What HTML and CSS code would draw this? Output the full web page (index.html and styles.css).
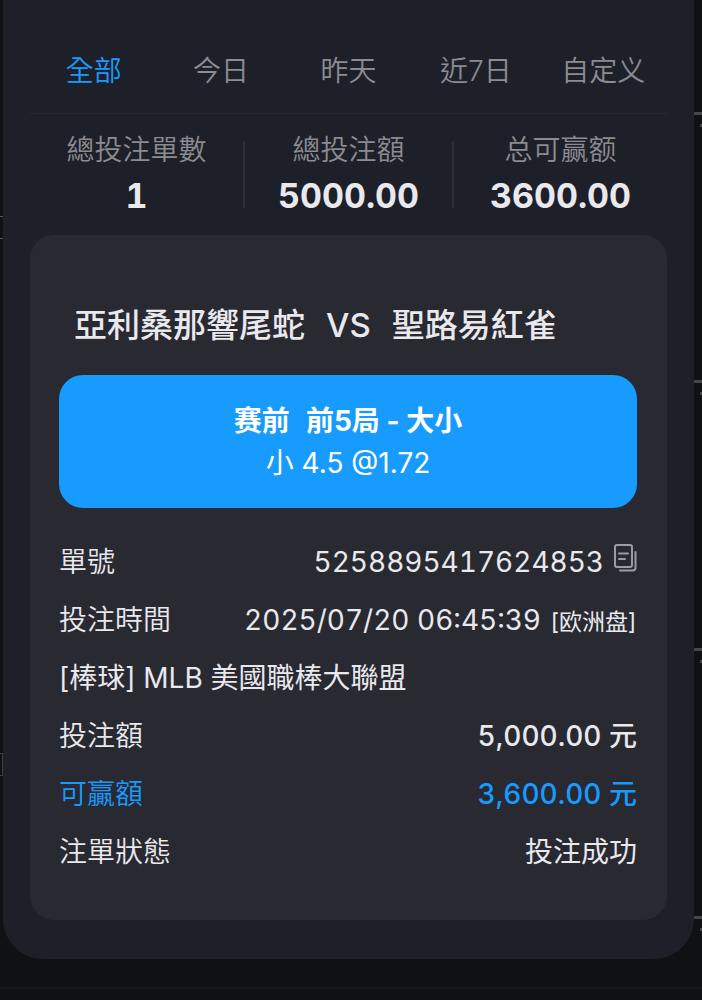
FILE: index.html
```html
<!DOCTYPE html>
<html lang="zh-Hant">
<head>
    <meta charset="UTF-8">
    <meta name="viewport" content="width=device-width, initial-scale=1.0">
    <title>投注記錄</title>
    <link rel="stylesheet" href="styles.css">
</head>
<body>
    <main class="panel">
        <nav class="tabs">
            <button class="tab active" type="button">全部</button>
            <button class="tab" type="button">今日</button>
            <button class="tab" type="button">昨天</button>
            <button class="tab" type="button">近7日</button>
            <button class="tab" type="button">自定义</button>
        </nav>

        <section class="stats">
            <div class="stat">
                <span class="stat-label">總投注單數</span>
                <strong class="stat-value">1</strong>
            </div>
            <div class="stat">
                <span class="stat-label">總投注額</span>
                <strong class="stat-value">5000.00</strong>
            </div>
            <div class="stat">
                <span class="stat-label">总可赢额</span>
                <strong class="stat-value">3600.00</strong>
            </div>
        </section>

        <article class="card">
            <h1 class="match">
                <span>亞利桑那響尾蛇</span>
                <span>VS</span>
                <span>聖路易紅雀</span>
            </h1>

            <div class="pick">
                <p class="pick-market">
                    <span>赛前</span>
                    <span>前5局 - 大小</span>
                </p>
                <p class="pick-odds">小 4.5 @1.72</p>
            </div>

            <dl class="details">
                <div class="row">
                    <dt>單號</dt>
                    <dd>
                        5258895417624853
                        <button class="copy-btn" type="button" aria-label="複製單號">
                            <svg width="24" height="30" viewBox="0 0 24 30" fill="none" stroke="currentColor" stroke-width="2" stroke-linecap="round" stroke-linejoin="round">
                                <rect x="2" y="2" width="17" height="22" rx="2"/>
                                <path d="M6 10.500h9M6 16h6"/>
                                <path d="M22.500 9v15.500a3 3 0 0 1-3 3H7"/>
                            </svg>
                        </button>
                    </dd>
                </div>
                <div class="row">
                    <dt>投注時間</dt>
                    <dd>2025/07/20 06:45:39 <small class="market-zone">[欧洲盘]</small></dd>
                </div>
                <div class="row">
                    <dt class="league">[棒球] MLB 美國職棒大聯盟</dt>
                </div>
                <div class="row">
                    <dt>投注額</dt>
                    <dd class="amount">5,000.00 元</dd>
                </div>
                <div class="row win">
                    <dt>可贏額</dt>
                    <dd class="amount">3,600.00 元</dd>
                </div>
                <div class="row">
                    <dt>注單狀態</dt>
                    <dd>投注成功</dd>
                </div>
            </dl>
        </article>
    </main>
</body>
</html>
```
FILE: styles.css
```css
:root {
    --primary: #189bff;
    --backdrop: #101115;
    --panel: #1e2029;
    --card: #292932;
    --text: #e8e8ed;
    --muted: #8b8b92;
    --line: #272931;
    --divider: #2e3037;
}

* {
    box-sizing: border-box;
}

/* Contenido de la página que asoma detrás del panel */
body {
    margin: 0;
    min-height: 100vh;
    padding: 0 8px 41px 3px;
    background-color: var(--backdrop);
    background-image:
        linear-gradient(#55565b, #55565b),
        linear-gradient(#55565b, #55565b),
        linear-gradient(#3c3d42, #3c3d42),
        linear-gradient(#3c3d42, #3c3d42),
        linear-gradient(#3c3d42, #3c3d42),
        linear-gradient(#17181c, #17181c),
        linear-gradient(#45464b 3px, transparent 3px),
        linear-gradient(#45464b 3px, transparent 3px);
    background-size: 3px 1px, 3px 1px, 3px 1px, 1px 22px, 3px 1px, 100% 2px, 8px 268px, 2px 268px;
    background-position: 0 216px, 0 238px, 0 753px, 2px 753px, 0 775px, 0 987px, right 112px, right 124px;
    background-repeat: no-repeat, no-repeat, no-repeat, no-repeat, no-repeat, no-repeat, repeat-y, repeat-y;
    color: var(--text);
    font-family: Inter, "Noto Sans CJK TC", sans-serif;
    font-size: 28px;
    font-weight: 400;
}

button {
    padding: 0;
    border: none;
    background: none;
    color: inherit;
    font: inherit;
    cursor: pointer;
}

.panel {
    padding: 51px 27px 39px;
    border-radius: 0 0 40px 40px;
    background: var(--panel);
}

.tabs {
    display: grid;
    grid-template-columns: repeat(5, 1fr);
    padding-bottom: 22px;
    border-bottom: 1px solid var(--line);
}

.tab {
    color: var(--muted);
    line-height: 40px;
    font-weight: 350;
    white-space: nowrap;
}

.tab.active {
    color: var(--primary);
}

.stats {
    display: grid;
    grid-template-columns: 213fr 209fr 215fr;
    padding: 27px 0;
}

.stat {
    display: flex;
    flex-direction: column;
    align-items: center;
    justify-content: center;
    height: 67px;
    padding-bottom: 4px;
}

.stat + .stat {
    border-left: 2px solid var(--divider);
}

.stat-label {
    color: var(--muted);
    font-weight: 350;
    line-height: 46px;
}

.stat-value {
    font-size: 34px;
    font-weight: 700;
    line-height: 46px;
    font-variant-numeric: tabular-nums;
}

.card {
    padding: 66px 30px 39px 29px;
    border-radius: 24px;
    background: var(--card);
}

.match {
    display: flex;
    gap: 21px;
    margin: 0 15px 26px;
    font-size: 33px;
    font-weight: 500;
    line-height: 48px;
}

.pick {
    margin-bottom: 25px;
    padding: 25px 16px 24px;
    border-radius: 24px;
    background: var(--primary);
    color: white;
    line-height: 42px;
    text-align: center;
}

.pick p {
    margin: 0;
}

.pick-market {
    display: flex;
    justify-content: center;
    gap: 16px;
    font-weight: 700;
}

.pick-odds {
    font-weight: 400;
}

.details {
    margin: 0;
}

.row {
    display: flex;
    justify-content: space-between;
    height: 58px;
    line-height: 58px;
}

.row dt {
    font-weight: 350;
}

.row .league {
    font-weight: 400;
}

.row dd {
    display: flex;
    align-items: baseline;
    gap: 9px;
    margin: 0;
    font-variant-numeric: tabular-nums;
}

.row .amount {
    font-weight: 500;
}

.win {
    color: var(--primary);
}

.copy-btn {
    display: flex;
    align-self: center;
    padding-bottom: 8px;
    color: #9b9ba3;
}

.market-zone {
    font-size: 23px;
    line-height: 28px;
}
```
